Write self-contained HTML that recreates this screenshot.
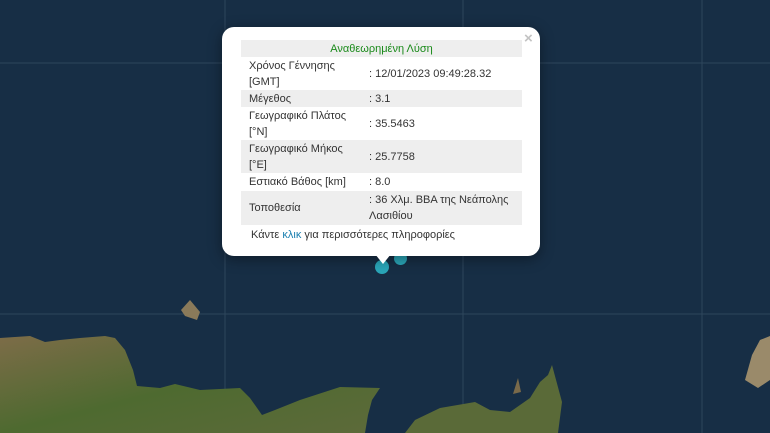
<!DOCTYPE html><html><head><meta charset="utf-8"><style>
*{margin:0;padding:0;box-sizing:border-box}
body{width:770px;height:433px;overflow:hidden;background:#172e45;font-family:"Liberation Sans",sans-serif;position:relative}
.pop{position:absolute;left:222px;top:27px;width:318px;height:229px;background:#fff;border-radius:12px;box-shadow:0 3px 14px rgba(0,0,0,.4)}
.tail{position:absolute;left:375px;top:254px;width:0;height:0;border-left:8px solid transparent;border-right:8px solid transparent;border-top:10px solid #fff;z-index:2}
.x{position:absolute;left:302px;top:3px;color:#c3c3c3;font-size:15px;font-weight:bold}
table{position:absolute;left:19px;top:13px;width:281px;border-collapse:collapse;font-size:11px;color:#333}
td{padding:0 8px;line-height:16px;vertical-align:middle}
tr.g{background:#eeeeee}
td.v{padding-left:2px}
.h td{text-align:center;color:#1a8a1a;height:17px}
.l{position:absolute;left:29px;top:202px;font-size:11px;color:#333}
.l span{color:#1a7fb0}
.m{position:absolute;border-radius:50%;background:#2aa6b8}
</style></head><body>
<svg width="770" height="433" style="position:absolute;left:0;top:0">
<defs><linearGradient id="land" x1="0" y1="0" x2="1" y2="1"><stop offset="0" stop-color="#7d6c48"/><stop offset=".5" stop-color="#4e6a30"/><stop offset="1" stop-color="#5d6a3a"/></linearGradient></defs>
<g stroke="#3e566c" stroke-width="1" opacity=".6"><line x1="225" y1="0" x2="225" y2="433"/><line x1="463" y1="0" x2="463" y2="433"/><line x1="702" y1="0" x2="702" y2="433"/><line x1="0" y1="63" x2="770" y2="63"/><line x1="0" y1="314" x2="770" y2="314"/></g>
<polygon fill="url(#land)" points="0,338 30,336 45,342 60,340 80,338 105,336 115,338 125,350 133,370 137,386 160,388 175,384 200,390 240,388 250,398 262,415 275,410 300,400 340,387 380,388 372,400 368,415 365,433 0,433"/>
<polygon fill="#5a6a38" points="405,433 415,420 440,408 475,402 490,410 510,412 530,398 540,382 548,375 552,365 562,402 558,433"/>
<polygon fill="#8a7a5a" points="181,310 190,300 200,312 197,320 185,316"/>
<polygon fill="#9a8a6a" points="745,380 752,355 760,340 770,336 770,380 758,388"/>
<polygon fill="#7a6a4a" points="513,394 518,378 521,392"/>
</svg>
<div class="m" style="left:394px;top:252px;width:13px;height:13px"></div>
<div class="m" style="left:375px;top:260px;width:14px;height:14px"></div>
<div class="pop">
<div class="x">×</div>
<table>
<tr class="g h"><td colspan="2">Αναθεωρημένη Λύση</td></tr>
<tr style="height:33px"><td style="width:126px">Χρόνος Γέννησης<br>[GMT]</td><td class="v">: 12/01/2023 09:49:28.32</td></tr>
<tr class="g" style="height:17px"><td>Μέγεθος</td><td class="v">: 3.1</td></tr>
<tr style="height:33px"><td>Γεωγραφικό Πλάτος<br>[°N]</td><td class="v">: 35.5463</td></tr>
<tr class="g" style="height:33px"><td>Γεωγραφικό Μήκος<br>[°E]</td><td class="v">: 25.7758</td></tr>
<tr style="height:18px"><td>Εστιακό Βάθος [km]</td><td class="v">: 8.0</td></tr>
<tr class="g" style="height:34px"><td>Τοποθεσία</td><td class="v">: 36 Χλμ. ΒΒΑ της Νεάπολης<br>Λασιθίου</td></tr>
</table>
<div class="l">Κάντε <span>κλικ</span> για περισσότερες πληροφορίες</div>
</div>
<div class="tail"></div>
</body></html>
